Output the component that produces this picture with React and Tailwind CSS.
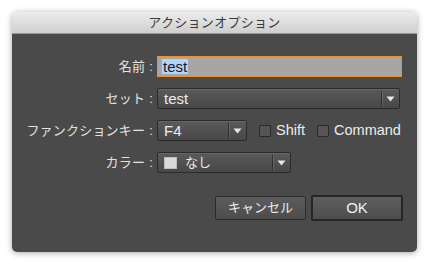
const font = { fontFamily: '"Liberation Sans", "Noto Sans CJK JP", sans-serif' };

const Arrow = () => (
  <svg width="9" height="6" viewBox="0 0 9 6" className="block">
    <path d="M0.5 0.5h8L4.5 5.5z" fill="#e6e6e6" />
  </svg>
);

const Select = ({ width, children }) => (
  <div
    className={`${width} h-[21px] flex items-stretch rounded-[2px] border border-[#2b2b2b] bg-gradient-to-b from-[#5a5a5a] to-[#484848] shadow-[inset_0_1px_0_rgba(255,255,255,0.08)]`}
  >
    <div className="flex-1 flex items-center pl-[6px] text-[15px] text-[#ececec] leading-none">{children}</div>
    <div className="w-px my-[2px] bg-[#2f2f2f] shadow-[1px_0_0_rgba(255,255,255,0.12)]" />
    <div className="w-[17px] flex items-center justify-center">
      <Arrow />
    </div>
  </div>
);

const Label = ({ children }) => (
  <div className="w-[145px] pr-[4px] text-right text-[13px] text-[#e2e2e2] whitespace-nowrap leading-none tracking-[0.2px]">
    {children}
    <span className="ml-[4px]">:</span>
  </div>
);

const Check = ({ label }) => (
  <div className="flex items-center gap-[5px]">
    <div className="w-[12px] h-[12px] border border-[#2a2a2a] bg-[#555555] rounded-[1px]" />
    <span className="text-[14.5px] text-[#ececec] leading-none">{label}</span>
  </div>
);

export default function App() {
  return (
    <div className="w-[430px] h-[265px] bg-white pt-[12px] pl-[12px]" style={font}>
      <div className="w-[405px] h-[240px] flex flex-col rounded-[5px] overflow-hidden shadow-[0_1px_6px_rgba(0,0,0,0.35)]">
        <div className="h-[22px] flex items-center justify-center bg-gradient-to-b from-[#ececec] to-[#cfcfcf] border-b border-[#9a9a9a] text-[13px] text-[#3a3a3a] tracking-[0.3px]">
          アクションオプション
        </div>
        <div className="flex-1 bg-[#4a4a4a] pt-[22px] flex flex-col gap-[11px]">
          <div className="h-[21px] flex items-center">
            <Label>名前</Label>
            <div className="w-[245px] h-[21px] border border-[#e8922e] bg-[#a6a6a6] flex items-center pl-[4px]">
              <span className="bg-[#b3d3fb] text-[15px] text-[#1a1a1a] leading-[15px] px-[1px]">test</span>
            </div>
          </div>
          <div className="h-[21px] flex items-center">
            <Label>セット</Label>
            <Select width="w-[243px]">test</Select>
          </div>
          <div className="h-[21px] flex items-center">
            <Label>ファンクションキー</Label>
            <Select width="w-[90px]">F4</Select>
            <div className="ml-[12px] flex items-center gap-[12px]">
              <Check label="Shift" />
              <Check label="Command" />
            </div>
          </div>
          <div className="h-[21px] flex items-center">
            <Label>カラー</Label>
            <Select width="w-[134px]">
              <div className="w-[13px] h-[12px] bg-[#d9d9d9] border border-[#bdbdbd] mr-[8px]" />
              <span className="text-[13px]">なし</span>
            </Select>
          </div>
          <div className="flex justify-end items-center gap-[5px] pr-[14px] mt-[11px]">
            <div className="w-[91px] h-[24px] flex items-center justify-center border border-[#2c2c2c] rounded-[2px] bg-gradient-to-b from-[#5c5c5c] to-[#4c4c4c] text-[13px] text-[#ececec]">
              キャンセル
            </div>
            <div className="w-[92px] h-[26px] flex items-center justify-center border-2 border-[#262626] rounded-[2px] bg-gradient-to-b from-[#5e5e5e] to-[#4d4d4d] text-[15px] text-[#f0f0f0]">
              OK
            </div>
          </div>
        </div>
      </div>
    </div>
  );
}
